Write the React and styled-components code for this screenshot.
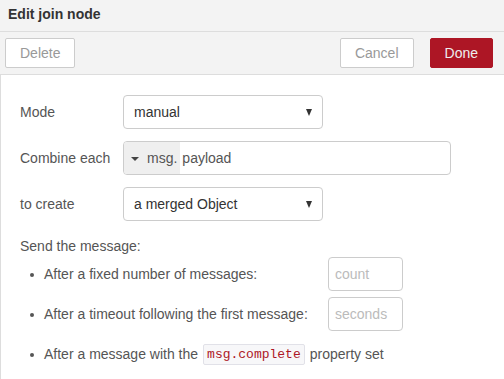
import React from "react";
import styled, { createGlobalStyle } from "styled-components";

const GlobalStyle = createGlobalStyle`
    body {
        margin: 0;
        background: #ffffff;
        font-family: "Liberation Sans", Arial, sans-serif;
        font-size: 14px;
        color: #555;
    }
`;

const App = () => {
    return (
        <Tray>
            <GlobalStyle />
            <Title>Edit join node</Title>
            <Toolbar>
                <Button>Delete</Button>
                <Spacer />
                <Button>Cancel</Button>
                <Button primary>Done</Button>
            </Toolbar>
            <Body>
                <Row>
                    <Label>Mode</Label>
                    <Select>
                        <span>manual</span>
                        <Arrow />
                    </Select>
                </Row>
                <Row>
                    <Label>Combine each</Label>
                    <TypedInput>
                        <TypeButton>
                            <Caret />
                            msg.
                        </TypeButton>
                        <TypedValue>payload</TypedValue>
                    </TypedInput>
                </Row>
                <Row>
                    <Label>to create</Label>
                    <Select>
                        <span>a merged Object</span>
                        <Arrow />
                    </Select>
                </Row>
                <Heading>Send the message:</Heading>
                <List>
                    <Item>
                        <Dot />
                        <ItemText>After a fixed number of messages:</ItemText>
                        <SmallInput>count</SmallInput>
                    </Item>
                    <Item>
                        <Dot />
                        <ItemText>After a timeout following the first message:</ItemText>
                        <SmallInput>seconds</SmallInput>
                    </Item>
                    <Item>
                        <Dot />
                        <span>After a message with the</span>
                        <Code>msg.complete</Code>
                        <span>property set</span>
                    </Item>
                </List>
            </Body>
        </Tray>
    );
};

const Tray = styled.div`
    width: 504px;
    height: 379px;
    overflow: hidden;
    background: #fff;
`;

const Title = styled.div`
    height: 31px;
    line-height: 28px;
    padding: 0 8px;
    background: #f3f3f3;
    border-bottom: 1px solid #ddd;
    font-weight: bold;
    color: #333;
`;

const Toolbar = styled.div`
    display: flex;
    align-items: center;
    gap: 16px;
    height: 42px;
    padding: 0 11px 0 5px;
    background: #f3f3f3;
    border-bottom: 1px solid #ddd;
`;

const Spacer = styled.div`
    flex: 1;
`;

const Button = styled.div`
    height: 30px;
    box-sizing: border-box;
    display: flex;
    align-items: center;
    padding: 0 14px;
    border-radius: 2px;
    border: 1px solid ${(p) => (p.primary ? "#AD1625" : "#ccc")};
    background: ${(p) => (p.primary ? "#AD1625" : "#fff")};
    color: ${(p) => (p.primary ? "#eee" : "#999")};
`;

const Body = styled.div`
    height: 304px;
    padding: 20px 0 0 19px;
    border-left: 1px solid #ddd;
`;

const Row = styled.div`
    display: flex;
    align-items: center;
    height: 34px;
    margin-bottom: 12px;
`;

const Label = styled.div`
    width: 103px;
`;

const Select = styled.div`
    width: 200px;
    height: 34px;
    box-sizing: border-box;
    display: flex;
    align-items: center;
    justify-content: space-between;
    padding: 0 10px 0 10px;
    border: 1px solid #ccc;
    border-radius: 4px;
    color: #333;
`;

const Arrow = styled.div`
    width: 0;
    height: 0;
    border-left: 3.5px solid transparent;
    border-right: 3.5px solid transparent;
    border-top: 7px solid #333;
    margin-top: 1px;
`;

const TypedInput = styled.div`
    width: 328px;
    height: 34px;
    box-sizing: border-box;
    display: flex;
    border: 1px solid #ccc;
    border-radius: 4px;
    overflow: hidden;
`;

const TypeButton = styled.div`
    display: flex;
    align-items: center;
    gap: 8px;
    padding: 0 3px 0 7px;
    background: #efefef;
    color: #555;
`;

const Caret = styled.div`
    width: 0;
    height: 0;
    border-left: 4px solid transparent;
    border-right: 4px solid transparent;
    border-top: 4px solid #444;
    margin-top: 2px;
`;

const TypedValue = styled.div`
    display: flex;
    align-items: center;
    padding-left: 2px;
    color: #555;
`;

const Heading = styled.div`
    margin-top: 15px;
    line-height: 20px;
`;

const List = styled.div`
    display: flex;
    flex-direction: column;
    gap: 6px;
    margin-top: 1px;
`;

const Item = styled.div`
    display: flex;
    align-items: center;
    height: 34px;
    padding-left: 10px;
`;

const Dot = styled.div`
    width: 4px;
    height: 4px;
    border-radius: 50%;
    background: #555;
    margin-right: 10px;
    margin-top: 2px;
`;

const ItemText = styled.div`
    width: 284px;
`;

const SmallInput = styled.div`
    width: 75px;
    height: 34px;
    box-sizing: border-box;
    display: flex;
    align-items: center;
    padding-left: 6px;
    border: 1px solid #ccc;
    border-radius: 4px;
    color: #bbb;
`;

const Code = styled.code`
    font-family: "Liberation Mono", monospace;
    font-size: 13px;
    color: #AD1625;
    background: #f7f7f9;
    border: 1px solid #e1e1e8;
    border-radius: 2px;
    padding: 2px 3px;
    margin: 0 5px;
`;

export default App;
